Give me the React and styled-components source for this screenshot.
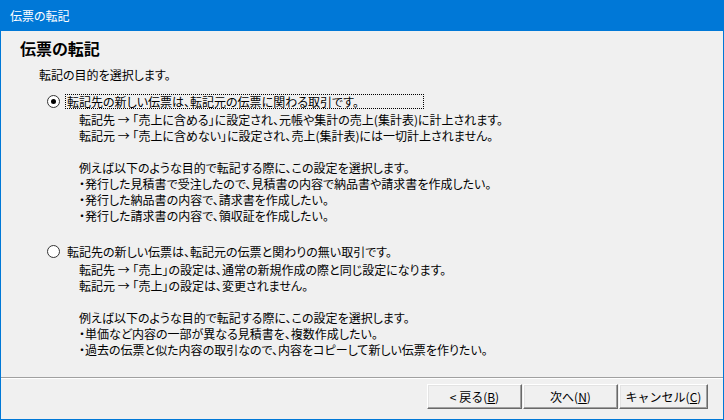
import React from "react";
import styled, { createGlobalStyle } from "styled-components";

const Global = createGlobalStyle`
  html, body { margin: 0; padding: 0; background: #f0f0f0; }
  body {
    font-family: "Noto Sans CJK JP", "Liberation Sans", sans-serif;
    font-size: 12px;
    color: #000;
  }
`;

const Window = styled.div`
  width: 724px;
  height: 420px;
  box-sizing: border-box;
  display: flex;
  flex-direction: column;
  background: #f0f0f0;
  border: 1px solid #0078d7;
  border-top: none;
`;

const TitleBar = styled.div`
  height: 31px;
  flex: none;
  margin: 0 -1px;
  background: #0078d7;
  color: #fff;
  display: flex;
  align-items: center;
  padding-left: 10px;
  font-size: 12px;
  font-feature-settings: "palt";
`;

const Content = styled.div`
  flex: 1;
  display: flex;
  flex-direction: column;
  padding: 7px 0 0 38px;
  font-feature-settings: "palt";
`;

const Heading = styled.h1`
  margin: 0 0 9px -19px;
  font-size: 16px;
  line-height: 20px;
  font-weight: bold;
`;

const Intro = styled.div`
  line-height: 16px;
  height: 16px;
  margin-bottom: 10px;
`;

const Option = styled.div`
  display: flex;
  flex-direction: column;
  margin-left: 8px;
  margin-bottom: ${(p) => p.$gap || 0}px;
`;

const RadioRow = styled.div`
  display: flex;
  align-items: center;
  height: 16px;
  gap: 5px;
`;

const RadioCircle = styled.span`
  width: 13px;
  height: 13px;
  box-sizing: border-box;
  border-radius: 50%;
  border: 1px solid #333;
  background: #fff;
  display: flex;
  align-items: center;
  justify-content: center;
  flex: none;
  &::after {
    content: "";
    width: 5px;
    height: 5px;
    border-radius: 50%;
    background: ${(p) => (p.$checked ? "#000" : "transparent")};
  }
`;

const RadioLabel = styled.span`
  box-sizing: border-box;
  height: 15px;
  line-height: 13px;
  padding: 0 1px;
  width: ${(p) => (p.$focused ? "359px" : "auto")};
  border: 1px dotted ${(p) => (p.$focused ? "#000" : "transparent")};
  white-space: nowrap;
`;

const Details = styled.div`
  margin: 3px 0 0 32px;
  display: flex;
  flex-direction: column;
`;

const Line = styled.div`
  line-height: 16px;
  height: 16px;
  white-space: pre;
`;

const Footer = styled.div`
  flex: none;
  height: 42px;
  box-sizing: border-box;
  border-top: 1px solid #a0a0a0;
  box-shadow: inset 0 1px 0 #fff;
  display: flex;
  justify-content: flex-end;
  align-items: flex-start;
  padding: 6px 15px 0 0;
`;

const Button = styled.button`
  width: ${(p) => p.$w}px;
  height: 25px;
  margin-left: ${(p) => p.$ml || 0}px;
  box-sizing: border-box;
  background: #f0f0f0;
  border-style: solid;
  border-width: 1px;
  border-color: #fff #696969 #696969 #fff;
  box-shadow: inset -1px -1px 0 #a0a0a0, inset 1px 1px 0 #e3e3e3;
  font-family: "Noto Sans CJK JP", "Liberation Sans", sans-serif;
  font-size: 12px;
  color: #000;
  padding: 0;
  display: flex;
  align-items: center;
  justify-content: center;
`;

const Accel = styled.span`
  text-decoration: underline;
`;

const option1 = [
  "転記先 → 「売上に含める」に設定され、元帳や集計の売上(集計表)に計上されます。",
  "転記元 → 「売上に含めない」に設定され、売上(集計表)には一切計上されません。",
  "",
  "例えば以下のような目的で転記する際に、この設定を選択します。",
  "・発行した見積書で受注したので、見積書の内容で納品書や請求書を作成したい。",
  "・発行した納品書の内容で、請求書を作成したい。",
  "・発行した請求書の内容で、領収証を作成したい。",
];

const option2 = [
  "転記先 → 「売上」の設定は、通常の新規作成の際と同じ設定になります。",
  "転記元 → 「売上」の設定は、変更されません。",
  "",
  "例えば以下のような目的で転記する際に、この設定を選択します。",
  "・単価など内容の一部が異なる見積書を、複数作成したい。",
  "・過去の伝票と似た内容の取引なので、内容をコピーして新しい伝票を作りたい。",
];

export default function App() {
  return (
    <>
      <Global />
      <Window>
        <TitleBar>伝票の転記</TitleBar>
        <Content>
          <Heading>伝票の転記</Heading>
          <Intro>転記の目的を選択します。</Intro>
          <Option $gap={19}>
            <RadioRow>
              <RadioCircle $checked />
              <RadioLabel $focused>転記先の新しい伝票は、転記元の伝票に関わる取引です。</RadioLabel>
            </RadioRow>
            <Details>
              {option1.map((t, i) => (
                <Line key={i}>{t}</Line>
              ))}
            </Details>
          </Option>
          <Option>
            <RadioRow>
              <RadioCircle />
              <RadioLabel>転記先の新しい伝票は、転記元の伝票と関わりの無い取引です。</RadioLabel>
            </RadioRow>
            <Details>
              {option2.map((t, i) => (
                <Line key={i}>{t}</Line>
              ))}
            </Details>
          </Option>
        </Content>
        <Footer>
          <Button $w={95}>
            &lt; 戻る(<Accel>B</Accel>)
          </Button>
          <Button $w={95} $ml={1}>
            次へ(<Accel>N</Accel>)
          </Button>
          <Button $w={89} $ml={1}>
            キャンセル(<Accel>C</Accel>)
          </Button>
        </Footer>
      </Window>
    </>
  );
}
